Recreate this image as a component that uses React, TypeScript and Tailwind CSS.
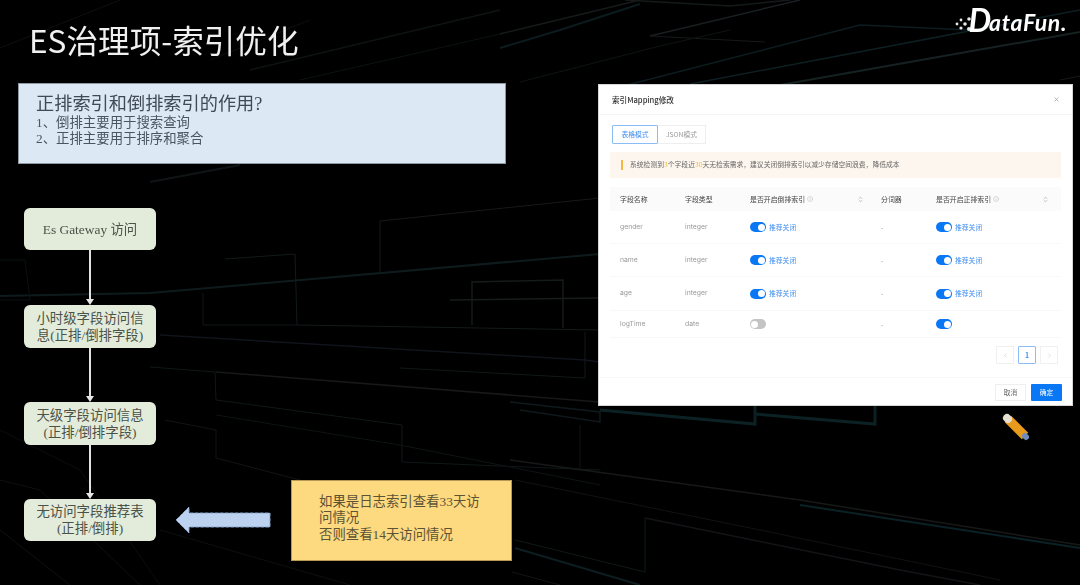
import { ChevronLeft, ChevronRight, ChevronsUpDown, Info, X } from "lucide-react";

const cjk = "font-['Noto_Sans_CJK_SC','Noto_Sans',sans-serif]";
const slideFont = "font-['Liberation_Serif','Noto_Sans_CJK_SC',serif]";

const bgLines = [
  // top right streaks
  { p: "500,34 640,0", c: "#1c2122", w: 1.5 },
  { p: "500,48 560,30 640,4", c: "#0f2226", w: 2 },
  { p: "650,36 800,0", c: "#20282a", w: 1.5 },
  { p: "650,36 765,42", c: "#1c2020", w: 1 },
  { p: "625,0 730,6 790,0", c: "#1a2021", w: 1.5 },
  { p: "520,82 660,46 730,30", c: "#13191a", w: 1 },
  { p: "600,92 860,25 970,30", c: "#102428", w: 1.5 },
  { p: "690,84 1080,10", c: "#11272b", w: 1.5 },
  { p: "780,85 1080,32", c: "#1c2a2a", w: 2 },
  { p: "1060,80 1080,76", c: "#1a2020", w: 1 },
  // top left streaks
  { p: "0,48 120,0", c: "#101314", w: 1 },
  { p: "210,60 310,20", c: "#111516", w: 1 },
  { p: "250,70 500,10", c: "#121819", w: 1.5 },
  { p: "300,80 500,34", c: "#0e1719", w: 1 },
  { p: "150,182 240,165", c: "#141a1c", w: 2 },
  // circuit lines in the middle
  { p: "600,198 380,221 380,272", c: "#1c2020", w: 1 },
  { p: "0,296 150,293 600,254", c: "#122224", w: 2 },
  { p: "225,259 295,254 297,325 600,330", c: "#182122", w: 1 },
  { p: "203,293 203,325 297,325", c: "#151c1d", w: 1 },
  { p: "472,325 472,282 563,280 563,328", c: "#1b2122", w: 1.5 },
  { p: "450,300 600,298", c: "#1e2222", w: 1.5 },
  { p: "160,335 585,360 600,362", c: "#141822", w: 1.5 },
  { p: "585,332 585,378 400,368", c: "#161e1f", w: 1 },
  { p: "0,260 25,260 30,300 0,300", c: "#0e1516", w: 1 },
  { p: "150,367 215,372 216,400 402,425 402,462 600,470", c: "#141e20", w: 1 },
  { p: "216,372 600,402", c: "#1e1f1c", w: 1.5 },
  { p: "165,420 216,430 216,458 300,480", c: "#171a1a", w: 1 },
  { p: "216,415 400,445 600,485", c: "#121818", w: 1 },
  { p: "0,430 80,470 160,585", c: "#0d1214", w: 1 },
  { p: "0,480 40,490 140,585", c: "#101516", w: 1 },
  { p: "0,530 70,585", c: "#121616", w: 1 },
  { p: "160,530 350,585", c: "#101414", w: 1 },
  // under the modal and bottom right
  { p: "510,402 600,412 600,422 520,410", c: "#132023", w: 1.5 },
  { p: "600,410 755,424 755,405", c: "#0f2a2e", w: 3 },
  { p: "755,414 875,424 875,405", c: "#0f2a2e", w: 3 },
  { p: "580,425 580,470", c: "#151818", w: 1 },
  { p: "510,460 800,500 1080,545", c: "#1d2020", w: 1.5 },
  { p: "800,505 1080,548", c: "#0d2a30", w: 2 },
  { p: "515,480 760,530 1000,580", c: "#17161c", w: 1 },
  { p: "645,518 900,570 980,585", c: "#1a1a1f", w: 1.5 },
  { p: "515,540 645,572 645,518", c: "#13201f", w: 1 },
  { p: "515,548 640,585", c: "#10262a", w: 2 },
  { p: "512,572 560,585", c: "#171b1b", w: 1 },
];

const rows = [
  { name: "gender", type: "integer", left: true, leftHint: true, rightHint: true },
  { name: "name", type: "integer", left: true, leftHint: true, rightHint: true },
  { name: "age", type: "integer", left: true, leftHint: true, rightHint: true },
  { name: "logTime", type: "date", left: false, leftHint: false, rightHint: false },
];

const rowHeights = ["h-[33px]", "h-[33px]", "h-[34px]", "h-[27px]"];

function Toggle({ on }: { on: boolean }) {
  return (
    <span
      className={
        "flex h-[10px] w-[16px] shrink-0 items-center rounded-full px-[1px] " +
        (on ? "justify-end bg-[#0a78f5]" : "justify-start bg-[#c4c4c4]")
      }
    >
      <span className="h-[7px] w-[7px] rounded-full bg-white" />
    </span>
  );
}

function SwitchCell({ on, hint }: { on: boolean; hint: boolean }) {
  return (
    <div className="flex items-center gap-[3px]">
      <Toggle on={on} />
      {hint && <span className="text-[6.8px] text-[#3f8ef0]">推荐关闭</span>}
    </div>
  );
}

function HeadCell({ label, sort, pr = "pr-0" }: { label: string; sort?: boolean; pr?: string }) {
  return (
    <div className={"flex items-center " + pr}>
      <span>{label}</span>
      {sort && (
        <>
          <Info className="ml-[2px] h-[6px] w-[6px] text-[#bbbbbb]" />
          <ChevronsUpDown className="ml-auto h-[7px] w-[7px] text-[#999999]" />
        </>
      )}
    </div>
  );
}

function IndexModal() {
  return (
    <div className={"flex h-[320px] w-[473px] flex-col bg-white shadow-[0_0_0_1px_#d6d6d6] " + cjk}>
      <div className="flex h-[30px] shrink-0 items-center justify-between border-b border-[#f5f5f5] pr-[12px] pl-[13px]">
        <span className="text-[7.6px] font-medium text-[#333333]">索引Mapping修改</span>
        <X className="h-[7px] w-[7px] text-[#888888]" />
      </div>

      <div className="flex flex-col px-[11px]">
        <div className="mt-[10px] ml-[2px] flex h-[19px] text-[6.8px]">
          <div className="flex w-[46px] items-center justify-center rounded-[1px] border border-[#8cbcf5] text-[#3f8ef0]">
            表格模式
          </div>
          <div className="flex w-[48px] items-center justify-center border border-l-0 border-[#eeeeee] text-[#999999]">
            JSON模式
          </div>
        </div>

        <div className="mt-[8px] flex h-[26px] items-center bg-[#fdf6ee] pb-[1px] pl-[11px] text-[6.8px] text-[#666666]">
          <span className="mr-[7px] h-[10px] w-[2px] bg-[#f4b942]" />
          <span>
            系统检测到<span className="text-[#f4b942]">3</span>个字段近
            <span className="text-[#f4b942]">30</span>天无检索需求，建议关闭倒排索引以减少存储空间浪费，降低成本
          </span>
        </div>

        <div className="mt-[9px] grid h-[24px] grid-cols-[65px_65px_131px_55px_124px] items-stretch bg-[#fbfbfb] pl-[10px] text-[6.9px] text-[#444444]">
          <HeadCell label="字段名称" />
          <HeadCell label="字段类型" />
          <HeadCell label="是否开启倒排索引" sort pr="pr-[17px]" />
          <HeadCell label="分词器" />
          <HeadCell label="是否开启正排索引" sort pr="pr-[11px]" />
        </div>

        {rows.map((r, i) => (
          <div
            key={r.name}
            className={
              "grid grid-cols-[65px_65px_131px_55px_124px] items-center border-b border-[#f8f8f8] pl-[10px] text-[6.8px] leading-none text-[#999999] " +
              rowHeights[i]
            }
          >
            <span className="font-['Inter',sans-serif]">{r.name}</span>
            <span className="font-['Inter',sans-serif]">{r.type}</span>
            <SwitchCell on={r.left} hint={r.leftHint} />
            <span>-</span>
            <SwitchCell on hint={r.rightHint} />
          </div>
        ))}

        <div className="mt-[8px] flex justify-end gap-[4px] pr-[3px]">
          <div className="flex h-[18px] w-[18px] items-center justify-center border border-[#f0f0f0]">
            <ChevronLeft className="h-[7px] w-[7px] text-[#cccccc]" />
          </div>
          <div className="flex h-[18px] w-[18px] items-center justify-center rounded-[1px] border border-[#8cbcf5] text-[7px] font-semibold text-[#3f8ef0]">
            1
          </div>
          <div className="flex h-[18px] w-[18px] items-center justify-center border border-[#f0f0f0]">
            <ChevronRight className="h-[7px] w-[7px] text-[#cccccc]" />
          </div>
        </div>
      </div>

      <div className="mt-[13px] flex justify-end gap-[2px] border-t border-[#f8f8f8] pt-[6px] pr-[10px] text-[6.8px]">
        <div className="flex h-[17px] w-[31px] items-center justify-center border border-[#eeeeee] text-[#666666]">
          取消
        </div>
        <div className="ml-[3px] flex h-[17px] w-[31px] items-center justify-center rounded-[1px] bg-[#0a78f5] text-white">
          确定
        </div>
      </div>
    </div>
  );
}

function Connector({ h }: { h: string }) {
  return (
    <div className={"ml-[6px] flex w-[132px] flex-col items-center " + h}>
      <div className="w-[2px] flex-1 bg-[#e2e2e2]" />
      <svg width="8" height="6" viewBox="0 0 8 6" className="shrink-0">
        <path d="M0 0H8L4 6Z" fill="#e6e6e6" />
      </svg>
    </div>
  );
}

function FlowNode({ lines, h }: { lines: string[]; h: string }) {
  return (
    <div
      className={
        "ml-[6px] flex w-[132px] shrink-0 flex-col items-center justify-center rounded-[6px] bg-[#e3ecdb] text-[13.4px] leading-[17px] text-[#4b5248] " +
        h
      }
    >
      {lines.map((l) => (
        <div key={l} className="whitespace-nowrap">
          {l}
        </div>
      ))}
    </div>
  );
}

export default function App() {
  return (
    <div className="relative h-[585px] w-[1080px] overflow-hidden bg-black">
      <svg className="absolute inset-0 h-full w-full opacity-80 blur-[0.6px]" viewBox="0 0 1080 585" fill="none">
        {bgLines.map((l) => (
          <polyline key={l.p} points={l.p} stroke={l.c} strokeWidth={l.w} />
        ))}
      </svg>

      <div className={"relative flex h-full flex-col blur-[0.5px] " + cjk}>
        <header className="flex h-[83px] shrink-0 items-start justify-between pr-[13px] pl-[29px]">
          <h1 className="mt-[19px] text-[31.6px] leading-[40px] font-normal text-[#f0f0f0]">ES治理项-索引优化</h1>
          <div className="mt-[6px] flex items-end font-['Lato',sans-serif] text-white italic">
            <svg width="17" height="18" viewBox="0 0 17 18" className="-mr-[4px] mb-[1px]" fill="#e8e8e8">
              <circle cx="2" cy="9" r="1.4" />
              <circle cx="6" cy="5" r="1.4" />
              <circle cx="6" cy="13" r="1.6" />
              <circle cx="10" cy="9" r="1.8" />
              <circle cx="14" cy="4" r="1.8" />
              <circle cx="14" cy="14" r="2" />
            </svg>
            <span className="text-[32px] leading-[28px] font-bold">D</span>
            <span className="ml-[-2px] text-[23px] leading-[24px] font-bold tracking-[0.6px]">ataFun.</span>
          </div>
        </header>

        <div className="flex flex-1">
          <div className={"flex w-[599px] shrink-0 flex-col pl-[18px] " + slideFont}>
            <div className="flex h-[81px] w-[488px] flex-col border border-[#8e98a2] bg-[#dce8f4] pt-[10px] pl-[17px] text-[#4a5560]">
              <div className="text-[18.2px] leading-[21px] text-[#3f4a55]">正排索引和倒排索引的作用?</div>
              <div className="text-[13.4px] leading-[16px]">1、倒排主要用于搜索查询</div>
              <div className="text-[13.4px] leading-[16px]">2、正排主要用于排序和聚合</div>
            </div>

            <div className="mt-[44px] flex flex-col">
              <FlowNode h="h-[42px]" lines={["Es Gateway 访问"]} />
              <Connector h="h-[55px]" />
              <FlowNode h="h-[43px]" lines={["小时级字段访问信", "息(正排/倒排字段)"]} />
              <Connector h="h-[54px]" />
              <FlowNode h="h-[43px]" lines={["天级字段访问信息", "(正排/倒排字段)"]} />
              <Connector h="h-[54px]" />
              <div className="flex h-[42px] items-center">
                <FlowNode h="h-[42px]" lines={["无访问字段推荐表", "(正排/倒排)"]} />
                <svg width="96" height="28" viewBox="0 0 96 28" className="ml-[19px] shrink-0">
                  <path
                    d="M1 14L14 1V7H95V21H14V27Z"
                    fill="#bcd2ee"
                    stroke="#8aa6cc"
                    strokeWidth="1"
                    strokeDasharray="4 1"
                    strokeLinejoin="round"
                  />
                </svg>
                <div className="-my-[20px] ml-[20px] flex h-[81px] w-[221px] shrink-0 flex-col justify-center border border-[#b89a55] bg-[#fdd97f] pb-[3px] pl-[27px] text-[13.4px] leading-[16.5px] text-[#5c5334]">
                  <div>
                    如果是日志索引查看33天访
                    <br />
                    问情况
                    <br />
                    否则查看14天访问情况
                  </div>
                </div>
              </div>
            </div>
          </div>

          <div className="flex flex-col pt-[2px]">
            <div className="blur-[0.7px]">
              <IndexModal />
            </div>
            <svg width="30" height="30" viewBox="0 0 30 30" className="mt-[7px] ml-[402px]">
              <path d="M7 7L24 24" stroke="#e89a1c" strokeWidth="9" />
              <path d="M6 6L7 7" stroke="#e6e0d0" strokeWidth="8" strokeLinecap="round" />
              <path d="M24 24L25 25" stroke="#6f8db8" strokeWidth="6" strokeLinecap="round" />
            </svg>
          </div>
        </div>
      </div>
    </div>
  );
}
